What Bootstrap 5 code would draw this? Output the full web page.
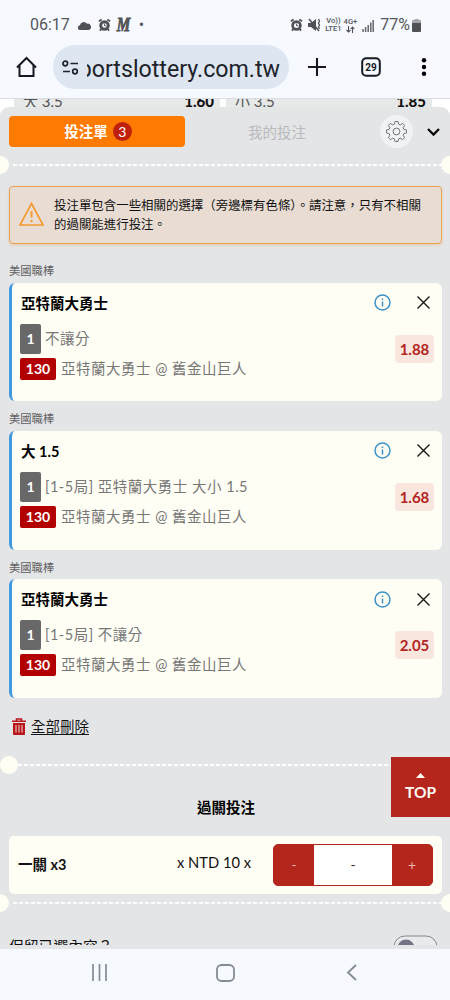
<!DOCTYPE html>
<html lang="zh-Hant">
<head>
<meta charset="utf-8">
<meta name="viewport" content="width=device-width, initial-scale=1">
<title>投注單</title>
<link href="https://cdn.jsdelivr.net/npm/bootstrap@5.3.0/dist/css/bootstrap.min.css" rel="stylesheet">
<style>
body{width:450px;height:1000px;overflow:hidden;background:#e4e5e7;color:#111;font-family:Lato,"Noto Sans CJK TC",sans-serif;font-size:14.5px;line-height:20px}
svg{display:block;flex:none}
.chrome-top{height:98px;background:#f6f9ff;font-family:Roboto,sans-serif}
.status-bar{height:45px;padding:5px 29px 0 30px;color:#55565a;font-size:16px}
.brand-m{margin-left:4px;font:italic 900 19px "Liberation Serif",serif;line-height:20px;transform:scaleX(.8);-webkit-text-stroke:.8px #505155}
.tiny-net{font-size:7.6px;line-height:8px;font-weight:500;text-align:center}
.address-row{height:44px;padding-left:15px}
.url-pill{width:236px;height:44px;margin-left:14px;border-radius:22px;background:#dde6f1;padding:0 9px 0 9px}
.url-clip{width:193px;height:34px;margin-top:4px;line-height:34px;font-size:23.2px;color:#20232a;overflow:hidden;display:flex;justify-content:flex-end;white-space:nowrap}
.odds-strip{height:10px;border-top:1px solid #dbdde3;background:#fff;padding:0 18px 0 14px;gap:6px;overflow:hidden}
.odds-cell{width:208px;height:9px;background:#e7e8e8;padding:0 6px 0 9px;font-size:15px;line-height:20px;color:#555;overflow:hidden}
.odds-cell span,.odds-cell b{margin-top:-8px}
.odds-cell b{color:#111;font-weight:900}
.strip-wrap{background:#fff;height:20px;margin-bottom:-11px}
.slip{height:842px;border-radius:9px 9px 0 0;background:#e4e5e7;overflow:hidden}
.tabs-row{height:49px;padding:9px 9px 0}
.tab-on{width:176px;height:31px;border-radius:4px;background:#ff7a00;color:#fff;font-weight:700;gap:5px;padding-left:2px}
.count-dot{width:19px;height:19px;border-radius:50%;background:#c0210f;font-size:14px;line-height:19px;font-weight:400;text-align:center}
.tab-off{width:184px;height:31px;color:#b9babc;padding-top:2px}
.gear-btn{width:33px;height:33px;border-radius:50%;background:#f1f2f4;margin:-1px 0 0 11px}
.perf{height:18px}
.dot-end{width:18px;height:18px;border-radius:50%;background:#fffef3;flex:none}
.dash-line{height:2px;background:repeating-linear-gradient(90deg,#fff 0 4px,transparent 4px 6px)}
.perf-edge{margin:0 -9px}
.warn-box{height:58px;margin:12px 8px 0 9px;border:1px solid #e6a556;border-radius:4px;background:#e9ddd3;box-shadow:0 1px 3px #e6a55677;padding:0 8px 2px 9px;gap:10px;font-size:12.45px;line-height:19px;white-space:nowrap}
.warn-box div{padding-top:2px}
.bets{padding-top:9px}
.league{height:29.5px;padding:8px 9px 0;font-size:11.3px;line-height:20px;color:#5f6062}
.bet{height:118.8px;margin:0 8px 0 9px;border-left:3px solid #429ade;border-radius:6px;background:#fffef5;padding:11px 8px 0 9px}
.bet-name{font-size:14.5px;font-weight:700;color:#000}
.bet-icons{gap:26px;margin:-2px 4px 0 0}
.bet-info{font-size:14.5px;letter-spacing:.5px;color:#777;padding-top:10px;gap:4px;margin-left:-1px}
.tag-g,.tag-r{border-radius:2px;color:#fff;font-weight:700;letter-spacing:0;text-align:center;display:block;font-size:14px}
.tag-g{width:21px;height:30px;line-height:30px;background:#686868}
.tag-r{width:36px;height:22px;line-height:22px;background:#b20000;margin-right:1px}
.odds-chip{width:39px;height:28px;line-height:28px;border-radius:4px;background:#f8e6df;color:#b3251e;font-size:15px;font-weight:700;text-align:center;margin-top:4px}
.clear-row{height:58px;padding:0 12px;gap:5px}
.clear-row a{color:#151515;text-decoration:underline;text-underline-offset:2px}
.parlay-title{height:62px;line-height:68px;font-weight:700;text-align:center;color:#000;padding-left:2px}
.parlay{height:58px;margin:0 8px 0 9px;border-radius:5px;background:#fffef5;padding:0 9px 0 9px}
.ntd{margin-right:22px;padding-bottom:5px;font-size:14.7px}
.stake{width:160px;height:42px;border:1px solid #b4251b;border-radius:5px;overflow:hidden;background:#b4251b;color:#efb4ae;line-height:40px;text-align:center;font-size:14px}
.stake span{width:40px}
.stake .stake-value{width:78px;background:#fff;color:#333}
.keep-row{height:33px;margin:0 8px 0 9px;overflow:hidden;font-size:14.8px}
.sys-nav{height:51px;background:#f6f9ff}
.to-top{right:0;top:757px;width:59px;height:60px;background:#b4251b;color:#fffef5;font-size:15.5px;font-weight:700}
</style>
</head>
<body class="position-relative">
<header class="chrome-top">
  <div class="status-bar d-flex align-items-center">
    <span>06:17</span>
    <svg style="margin-left:7px" width="14" height="9" viewBox="0 0 14 9"><path fill="#505155" d="M2.500 9a2.500 2.500 0 0 1 .4-4.800A4 4 0 0 1 10 2.700 3 3 0 0 1 11.500 9z"/></svg>
    <svg style="margin-left:7px" width="13" height="14" viewBox="0 0 14 14"><circle cx="7" cy="7.500" r="5.600" fill="#505155"/><path stroke="#505155" stroke-width="2" d="M1 3l3-2M13 3l-3-2M2 13l2-2M12 13l-2-2"/><circle cx="7" cy="7.500" r="2.500" fill="#f6f9ff"/><path d="M7 5.500v2.300h2" stroke="#505155" fill="none"/></svg>
    <b class="brand-m">M</b>
    <span style="margin-left:7px">•</span>
    <svg style="margin-right:-1px" class="ms-auto" width="13" height="14" viewBox="0 0 14 14"><circle cx="7" cy="7.500" r="5.600" fill="#505155"/><path stroke="#505155" stroke-width="2" d="M1 3l3-2M13 3l-3-2M2 13l2-2M12 13l-2-2"/><circle cx="7" cy="7.500" r="2.700" fill="#f6f9ff"/><path d="M7 5.500v2.300h2" stroke="#505155" fill="none"/></svg>
    <svg style="margin-left:6px" width="13" height="14" viewBox="0 0 13 14"><path fill="#505155" d="M0 5h3l5-4v12L3 9H0z"/><path d="M1 1l10 12" stroke="#505155" stroke-width="1.500"/><path d="M10.500 1l1 2-1 2 1 2-1 2 1 2" stroke="#505155" fill="none" stroke-width="1.300"/></svg>
    <span class="tiny-net" style="margin-left:4px">Vo))<br>LTE1</span>
    <span class="tiny-net" style="margin-left:2px">4G+<br>
      <svg class="mx-auto" width="9" height="7" viewBox="0 0 9 7"><path d="M2.500 0v6M.5 4l2 2 2-2M6.500 7V1M4.700 3l1.800-2 1.800 2" fill="none" stroke="#505155" stroke-width="1.100"/></svg></span>
    <svg style="margin-left:5px" width="12" height="13" viewBox="0 0 12 13"><path d="M1 13v-3M3.600 13V8M6.200 13V6M8.800 13V3.500M11.200 13V1" stroke="#66676b" stroke-width="1.500"/></svg>
    <span style="margin-left:6px">77%</span>
    <svg style="margin-left:2px" width="9" height="13" viewBox="0 0 9 13"><path fill="#a3a4a7" d="M2.500 0h4v1H8a1 1 0 0 1 1 1v3H0V2a1 1 0 0 1 1-1h1.500z"/><path fill="#505155" d="M0 4h9v8a1 1 0 0 1-1 1H1a1 1 0 0 1-1-1z"/></svg>
  </div>
  <div class="address-row d-flex align-items-center">
    <svg width="24" height="24" viewBox="0 0 24 24"><path d="M2 12.500L11.500 3l9.500 9.500M4.500 10.500V21h14V10.500" fill="none" stroke="#17191e" stroke-width="2"/></svg>
    <div class="url-pill d-flex align-items-center">
      <svg width="17" height="15" viewBox="0 0 17 15"><g fill="none" stroke="#20232a" stroke-width="1.700"><circle cx="3.300" cy="3.500" r="2.300"/><path d="M8.500 3.500H16M1 11.500h7"/><circle cx="13" cy="11.500" r="2.300"/></g></svg>
      <div class="url-clip ms-auto"><span>portslottery.com.tw</span></div>
    </div>
    <svg style="margin-left:19px" width="18" height="18" viewBox="0 0 18 18"><path d="M9 0v18M0 9h18" stroke="#17191e" stroke-width="2.100"/></svg>
    <svg style="margin-left:35px" width="20" height="20" viewBox="0 0 20 20"><rect x="1.200" y="1.200" width="17.600" height="17.600" rx="4" fill="none" stroke="#17191e" stroke-width="2"/><text x="10" y="13.800" text-anchor="middle" font-family="Roboto" font-size="10" font-weight="700" fill="#17191e">29</text></svg>
    <svg style="margin-left:40px" width="6" height="18" viewBox="0 0 6 18"><circle cx="3" cy="2.300" r="2.200"/><circle cx="3" cy="9" r="2.200"/><circle cx="3" cy="15.700" r="2.200"/></svg>
  </div>
</header>

<div class="strip-wrap">
  <div class="odds-strip d-flex">
    <div class="odds-cell d-flex justify-content-between"><span>大 3.5</span><b>1.60</b></div>
    <div class="odds-cell d-flex justify-content-between"><span>小 3.5</span><b>1.85</b></div>
  </div>
</div>

<main class="slip position-relative">
  <div class="tabs-row d-flex align-items-start">
    <div class="tab-on d-flex align-items-center justify-content-center">投注單<span class="count-dot">3</span></div>
    <div class="tab-off d-flex align-items-center justify-content-center">我的投注</div>
    <div class="gear-btn d-flex align-items-center justify-content-center">
      <svg width="21" height="21" viewBox="0 0 24 24"><path d="M10.300 1.500h3.400l.6 3 2.100.9 2.600-1.700 2.300 2.300-1.700 2.600.9 2.100 3 .6v3.400l-3 .6-.9 2.100 1.700 2.600-2.300 2.300-2.600-1.700-2.100.9-.6 3h-3.400l-.6-3-2.100-.9L5 22.300 2.700 20l1.700-2.600-.9-2.100-3-.6v-3.400l3-.6.9-2.100L2.700 6 5 3.700l2.600 1.700 2.100-.9z" transform="translate(0 -1)" fill="none" stroke="#6c6d70" stroke-width="1.100" stroke-linejoin="round"/><circle cx="12" cy="12" r="3.900" fill="none" stroke="#6c6d70" stroke-width="1.100"/></svg>
    </div>
    <svg style="margin:12px 0 0 14px" width="13" height="9" viewBox="0 0 13 9"><path d="M1 1l5.500 5.500L12 1" fill="none" stroke="#0b0b0b" stroke-width="2.300"/></svg>
  </div>
  <div class="perf perf-edge d-flex align-items-center"><i class="dot-end"></i><i class="dash-line flex-grow-1 ms-1"></i><i class="dot-end"></i></div>
  <div class="warn-box d-flex align-items-center">
    <svg width="25" height="24" viewBox="0 0 25 24"><path d="M12.500 1.500L24 23H1z" fill="none" stroke="#f39a31" stroke-width="1.700"/><path d="M12.500 9v6.500M12.500 18v2" stroke="#f39a31" stroke-width="2"/></svg>
    <div>投注單包含一些相關的選擇（旁邊標有色條）。請注意，只有不相關<br>的過關能進行投注。</div>
  </div>

  <div class="bets">
  <section>
    <div class="league">美國職棒</div>
    <article class="bet">
      <div class="d-flex align-items-center"><span class="bet-name">亞特蘭大勇士</span>
        <div class="bet-icons d-flex align-items-center ms-auto">
          <svg width="17" height="17" viewBox="0 0 17 17"><path d="M8.500 7.500v5M8.500 4.500v1.500" stroke="#3c93c9" stroke-width="1.500"/><circle cx="8.500" cy="8.500" r="7.500" fill="none" stroke="#3c93c9" stroke-width="1.500"/></svg>
          <svg width="13" height="13" viewBox="0 0 13 13"><path d="M.5.5l12 12M12.500.5l-12 12" stroke="#161616" stroke-width="1.400"/></svg></div></div>
      <div class="d-flex align-items-center">
        <div class="bet-info d-flex flex-column">
          <div class="d-flex align-items-center gap-1"><span class="tag-g">1</span><span>不讓分</span></div>
          <div class="d-flex align-items-center gap-1"><span class="tag-r">130</span><span>亞特蘭大勇士 @ 舊金山巨人</span></div>
        </div><span class="odds-chip ms-auto">1.88</span>
      </div>
    </article>
  </section>
  <section>
    <div class="league">美國職棒</div>
    <article class="bet">
      <div class="d-flex align-items-center"><span class="bet-name">大 1.5</span>
        <div class="bet-icons d-flex align-items-center ms-auto">
          <svg width="17" height="17" viewBox="0 0 17 17"><path d="M8.500 7.500v5M8.500 4.500v1.500" stroke="#3c93c9" stroke-width="1.500"/><circle cx="8.500" cy="8.500" r="7.500" fill="none" stroke="#3c93c9" stroke-width="1.500"/></svg>
          <svg width="13" height="13" viewBox="0 0 13 13"><path d="M.5.5l12 12M12.500.5l-12 12" stroke="#161616" stroke-width="1.400"/></svg></div></div>
      <div class="d-flex align-items-center">
        <div class="bet-info d-flex flex-column">
          <div class="d-flex align-items-center gap-1"><span class="tag-g">1</span><span>[1-5局] 亞特蘭大勇士 大小 1.5</span></div>
          <div class="d-flex align-items-center gap-1"><span class="tag-r">130</span><span>亞特蘭大勇士 @ 舊金山巨人</span></div>
        </div><span class="odds-chip ms-auto">1.68</span>
      </div>
    </article>
  </section>
  <section>
    <div class="league">美國職棒</div>
    <article class="bet">
      <div class="d-flex align-items-center"><span class="bet-name">亞特蘭大勇士</span>
        <div class="bet-icons d-flex align-items-center ms-auto">
          <svg width="17" height="17" viewBox="0 0 17 17"><path d="M8.500 7.500v5M8.500 4.500v1.500" stroke="#3c93c9" stroke-width="1.500"/><circle cx="8.500" cy="8.500" r="7.500" fill="none" stroke="#3c93c9" stroke-width="1.500"/></svg>
          <svg width="13" height="13" viewBox="0 0 13 13"><path d="M.5.5l12 12M12.500.5l-12 12" stroke="#161616" stroke-width="1.400"/></svg></div></div>
      <div class="d-flex align-items-center">
        <div class="bet-info d-flex flex-column">
          <div class="d-flex align-items-center gap-1"><span class="tag-g">1</span><span>[1-5局] 不讓分</span></div>
          <div class="d-flex align-items-center gap-1"><span class="tag-r">130</span><span>亞特蘭大勇士 @ 舊金山巨人</span></div>
        </div><span class="odds-chip ms-auto">2.05</span>
      </div>
    </article>
  </section>
  </div>

  <div class="clear-row d-flex align-items-center">
    <svg width="14" height="17" viewBox="0 0 14 17"><path d="M4.500 2.500V1h5v1.500M0 3.300h14" fill="none" stroke="#b9151b" stroke-width="1.600"/><path d="M1 5h12v11a1 1 0 0 1-1 1H2a1 1 0 0 1-1-1z" fill="#b9151b"/><path d="M4 7v7.500M7 7v7.500M10 7v7.500" stroke="#e9dcdd" stroke-width="1"/></svg>
    <a href="#">全部刪除</a>
  </div>
  <div class="perf d-flex align-items-center"><i class="dot-end"></i><i class="dash-line flex-grow-1"></i></div>
  <div class="parlay-title">過關投注</div>
  <div class="parlay d-flex align-items-center">
    <b>一關 x3</b>
    <span class="ntd ms-auto">x NTD 10 x</span>
    <div class="stake d-flex"><span>-</span><span class="stake-value">-</span><span>+</span></div>
  </div>
  <div class="perf perf-edge d-flex align-items-center"><i class="dot-end"></i><i class="dash-line flex-grow-1 ms-1"></i><i class="dot-end"></i></div>
  <div class="keep-row d-flex justify-content-between">
    <span style="padding-top:24px">保留已選內容？</span>
    <svg style="margin:23px 4px 0 0" width="45" height="24" viewBox="0 0 45 24"><rect x="1" y="1" width="43" height="22" rx="11" fill="#e9eaec" stroke="#85868f"/><circle cx="13" cy="13" r="8.500" fill="#747386"/></svg>
  </div>
</main>

<nav class="sys-nav d-flex align-items-center">
  <svg style="margin:-4px 0 0 91px" width="17" height="17" viewBox="0 0 17 17"><path d="M2 0v17M8.500 0v17M15 0v17" stroke="#868a91" stroke-width="1.700"/></svg>
  <svg style="margin:-4px 0 0 108px" width="19" height="18" viewBox="0 0 19 18"><rect x="1" y="1" width="17" height="16" rx="4.500" fill="none" stroke="#868a91" stroke-width="1.800"/></svg>
  <svg style="margin:-4px 0 0 111px" width="11" height="17" viewBox="0 0 11 17"><path d="M10 1L2 8.500l8 7.500" fill="none" stroke="#868a91" stroke-width="1.800"/></svg>
</nav>
<a class="to-top position-absolute d-flex flex-column align-items-center justify-content-center text-decoration-none" href="#">
  <svg style="margin:0 0 4px" width="9" height="5" viewBox="0 0 9 5"><path d="M0 5L4.500 0 9 5z" fill="#fffef5"/></svg>TOP</a>
<script src="https://cdn.jsdelivr.net/npm/bootstrap@5.3.0/dist/js/bootstrap.bundle.min.js"></script>
</body>
</html>
